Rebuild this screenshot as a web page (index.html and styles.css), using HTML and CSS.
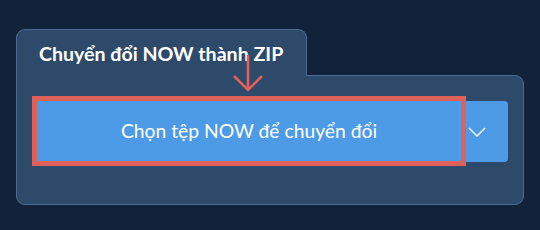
FILE: index.html
```html
<!DOCTYPE html>
<html lang="vi">
<head>
<meta charset="utf-8">
<link rel="stylesheet" href="styles.css">
</head>
<body>
<div class="widget">
  <div class="tab">Chuyển đổi NOW thành ZIP</div>
  <div class="panel">
    <div class="btn-group">
      <button class="main-btn">Chọn tệp NOW để chuyển đổi</button>
      <button class="drop-btn">
        <svg width="18" height="10" viewBox="0 0 18 10"><path d="M1 1 L9 9 L17 1" fill="none" stroke="#fff" stroke-width="1.3"/></svg>
      </button>
      <svg class="arrow" width="30" height="37" viewBox="0 0 30 37"><path d="M15 0 V35 M1 21 L15 35 L29 21" fill="none" stroke="#e0605a" stroke-width="2.6"/></svg>
    </div>
  </div>
</div>
</body>
</html>
```
FILE: styles.css
```css
html, body {
  margin: 0;
  padding: 0;
  background: #11233a;
  width: 540px;
  height: 230px;
  overflow: hidden;
}
body {
  font-family: Lato, "Noto Sans", sans-serif;
}
.widget {
  padding: 29px 16px 0 16px;
  width: 508px;
}
.tab {
  width: 291px;
  height: 47px;
  box-sizing: border-box;
  background: #2d4a6b;
  border: 1px solid #4a6b8f;
  border-bottom: none;
  border-radius: 9px 9px 0 0;
  color: #fff;
  font-weight: 700;
  font-size: 19.6px;
  line-height: 24px;
  padding: 12px 0 0 22px;
  position: relative;
  z-index: 1;
  margin-bottom: -1px;
}
.panel {
  height: 130px;
  box-sizing: border-box;
  background: #2d4a6b;
  border: 1px solid #4a6b8f;
  border-radius: 0 9px 9px 9px;
  padding: 25px 15px 0 20px;
}
.btn-group {
  display: flex;
  position: relative;
}
.main-btn {
  width: 424px;
  height: 60px;
  background: #4d9be6;
  border: none;
  outline: 5px solid #e0605a;
  color: #fff;
  font-family: Lato, "Noto Sans", sans-serif;
  font-size: 19.3px;
  font-weight: 400;
  border-radius: 0;
  position: relative;
  z-index: 1;
  padding: 0 0 1px 0;
}
.drop-btn {
  width: 47px;
  height: 61px;
  background: #4d9be6;
  border: none;
  border-radius: 0 4px 4px 0;
  display: flex;
  align-items: center;
  justify-content: flex-start;
  padding: 0 0 0 7px;
}
.arrow {
  position: absolute;
  left: 196px;
  top: -46px;
  z-index: 2;
}
```
